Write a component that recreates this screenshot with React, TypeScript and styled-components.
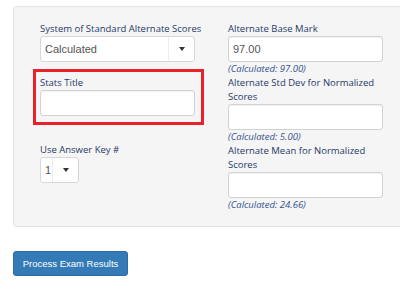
import React from 'react';
import styled, { createGlobalStyle } from 'styled-components';

const GlobalStyle = createGlobalStyle`
  html, body {
    margin: 0;
    padding: 0;
    background: #fff;
    overflow: hidden;
  }
  body {
    font-family: "Open Sans", "Liberation Sans", sans-serif;
  }
`;

const Page = styled.div`
  width: 400px;
  height: 282px;
  padding-top: 6px;
  box-sizing: border-box;
  overflow: hidden;
`;

const Well = styled.div`
  width: 420px;
  margin-left: 13px;
  padding: 15px 26px 14px;
  background: #f5f5f5;
  border: 1px solid #e3e3e3;
  border-radius: 4px;
  box-sizing: border-box;
  display: grid;
  grid-template-columns: 155px 155px;
  column-gap: 33px;
  align-items: start;
`;

const Column = styled.div`
  display: flex;
  flex-direction: column;
`;

const Label = styled.label<{ $nowrap?: boolean }>`
  font-size: 9.5px;
  line-height: 14px;
  color: #253a68;
  display: block;
  white-space: ${(p) => (p.$nowrap ? 'nowrap' : 'normal')};
`;

const Hint = styled.div`
  font-size: 9.5px;
  line-height: 14px;
  font-style: italic;
  color: #34528f;
`;

const Field = styled.div<{ $gap?: number }>`
  margin-top: ${(p) => p.$gap ?? 0}px;
  display: flex;
  flex-direction: column;
`;

const Highlight = styled.div`
  margin: 7px -9px 0 -7px;
  padding: 4px 6px 6px 4px;
  border: 3px solid #e8212b;
  display: flex;
  flex-direction: column;
`;

const TextBox = styled.div`
  height: 26px;
  box-sizing: border-box;
  background: #fff;
  border: 1px solid #d2d2d2;
  border-radius: 3px;
  box-shadow: inset 0 1px 1px rgba(0, 0, 0, 0.06);
  font-family: "Liberation Sans", Arial, sans-serif;
  font-size: 11px;
  color: #555;
  display: flex;
  align-items: center;
  padding-left: 4px;
`;

const SelectBox = styled.div<{ $width?: number }>`
  width: ${(p) => (p.$width ? `${p.$width}px` : '100%')};
  height: 26px;
  box-sizing: border-box;
  background: #fff;
  border: 1px solid #d8d8d8;
  border-radius: 3px;
  display: flex;
  align-items: stretch;
  font-family: "Liberation Sans", Arial, sans-serif;
  font-size: 11px;
  color: #555;
`;

const SelectValue = styled.span`
  flex: 1;
  display: flex;
  align-items: center;
  padding-left: 4px;
`;

const Caret = styled.span`
  width: 25px;
  border-left: 1px solid #ededed;
  display: flex;
  align-items: center;
  justify-content: center;
  &::after {
    content: '';
    border-left: 3px solid transparent;
    border-right: 3px solid transparent;
    border-top: 4px solid #333;
  }
`;

const Button = styled.button`
  margin: 24px 0 0 13px;
  width: 115px;
  height: 25px;
  background: #337ab7;
  border: 1px solid #2e6da4;
  border-radius: 3px;
  color: #fff;
  font-family: "Liberation Sans", Arial, sans-serif;
  font-size: 9.5px;
  padding: 0;
  display: block;
`;

export default function App() {
  return (
    <Page>
      <GlobalStyle />
      <Well>
        <Column>
          <Field>
            <Label $nowrap>System of Standard Alternate Scores</Label>
            <SelectBox>
              <SelectValue>Calculated</SelectValue>
              <Caret />
            </SelectBox>
          </Field>
          <Highlight>
            <Label>Stats Title</Label>
            <TextBox />
          </Highlight>
          <Field $gap={18}>
            <Label>Use Answer Key #</Label>
            <SelectBox $width={39}>
              <SelectValue>1</SelectValue>
              <Caret />
            </SelectBox>
          </Field>
        </Column>
        <Column>
          <Field>
            <Label>Alternate Base Mark</Label>
            <TextBox>97.00</TextBox>
            <Hint>(Calculated: 97.00)</Hint>
          </Field>
          <Field>
            <Label>Alternate Std Dev for Normalized Scores</Label>
            <TextBox />
            <Hint>(Calculated: 5.00)</Hint>
          </Field>
          <Field>
            <Label>Alternate Mean for Normalized Scores</Label>
            <TextBox />
            <Hint>(Calculated: 24.66)</Hint>
          </Field>
        </Column>
      </Well>
      <Button>Process Exam Results</Button>
    </Page>
  );
}
